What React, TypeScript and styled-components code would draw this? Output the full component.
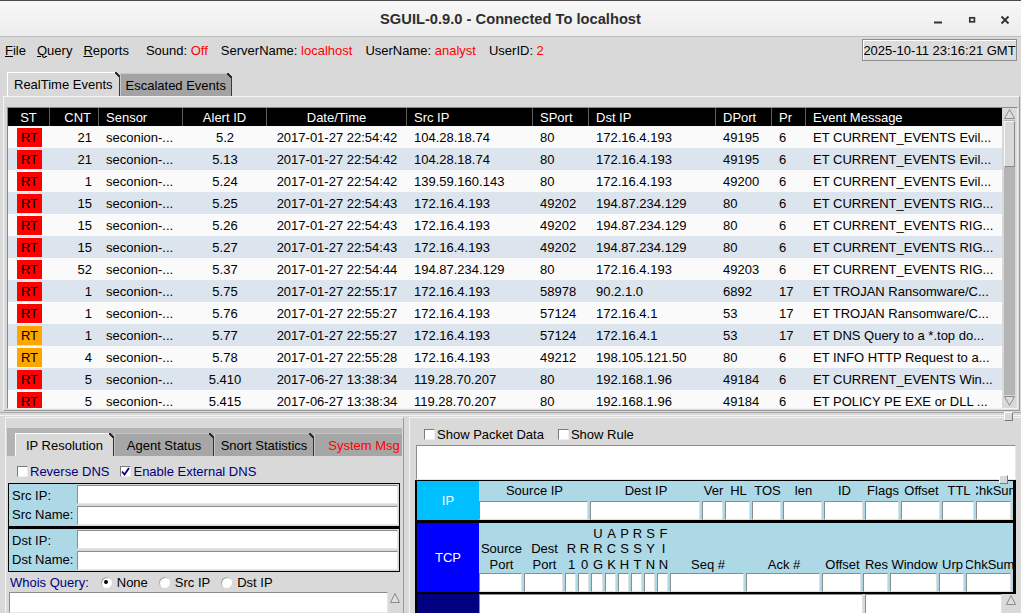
import React from "react";
import styled, { createGlobalStyle } from "styled-components";

const GlobalStyle = createGlobalStyle`
  html, body { margin: 0; padding: 0; background: #d9d9d9; }
  body { font-family: "Liberation Sans", Arial, Helvetica, sans-serif; font-size: 13px; color: #000; }
  * { box-sizing: border-box; }
`;

const Window = styled.div`
  position: relative;
  width: 1021px;
  height: 613px;
  overflow: hidden;
  background: #d9d9d9;
  display: flex;
  flex-direction: column;
`;

/* ---------- title bar ---------- */
const TitleBar = styled.div`
  flex: 0 0 37px;
  border-top: 1px solid #4a4a4a;
  border-bottom: 1px solid #bdbdbd;
  background: linear-gradient(#f8f8f8, #ececec);
  display: grid;
  grid-template-columns: 1fr auto 1fr;
  align-items: center;
`;
const Title = styled.div`
  grid-column: 2;
  font-weight: bold;
  font-size: 14.7px;
  color: #2e2e2e;
`;
const WinButtons = styled.div`
  grid-column: 3;
  justify-self: end;
  display: flex;
  height: 100%;
`;
const WinButton = styled.div<{ $w: number }>`
  width: ${(p) => p.$w}px;
  height: 100%;
  display: flex;
  align-items: center;
  justify-content: center;
`;

/* ---------- menu bar ---------- */
const MenuBar = styled.div`
  flex: 0 0 26px;
  display: flex;
  align-items: center;
  padding: 0 4px 0 5px;
  white-space: nowrap;
`;
const Menus = styled.div`
  display: flex;
  gap: 11px;
`;
const StatusGroup = styled.div`
  display: flex;
  gap: 13px;
  margin-left: 17px;
`;
const Value = styled.span`
  color: #ff0000;
`;
const Clock = styled.div`
  margin-left: auto;
  width: 155px;
  height: 22px;
  border: 1px solid #8c8c8c;
  box-shadow: inset 1px 1px 0 #ffffff;
  background: #dcdcdc;
  display: flex;
  align-items: center;
  justify-content: center;
  overflow: hidden;
`;

/* ---------- top notebook ---------- */
const TopSection = styled.div`
  flex: 0 0 auto;
  padding: 9px 1px 0 3px;
`;
const TabStrip = styled.div`
  display: flex;
  align-items: flex-end;
  padding-left: 4px;
  height: 24px;
`;
const TopTab = styled.div<{ $active?: boolean }>`
  position: relative;
  height: ${(p) => (p.$active ? 24 : 23)}px;
  padding: 0 ${(p) => (p.$active ? 6 : 5)}px 0 ${(p) => (p.$active ? 6 : 5)}px;
  display: flex;
  align-items: center;
  background: ${(p) => (p.$active ? "#d9d9d9" : "#a3a3a3")};
  border-left: 1px solid ${(p) => (p.$active ? "#ffffff" : "#c8c8c8")};
  border-top: 1px solid ${(p) => (p.$active ? "#ffffff" : "#c8c8c8")};
  border-right: 1px solid #3a3a3a;
  &::after {
    content: "";
    position: absolute;
    top: -1px;
    right: -1px;
    width: 5px;
    height: 5px;
    background: linear-gradient(to bottom left, #d9d9d9 0 38%, #2a2a2a 38% 62%, transparent 62%);
  }
`;
const TopPane = styled.div`
  border-top: 1px solid #f4f4f4;
  border-left: 1px solid #f4f4f4;
  border-right: 1px solid #9a9a9a;
  border-bottom: 1px solid #9a9a9a;
  padding: 10px 1px 1px 3px;
`;
const EventsFrame = styled.div`
  height: 302px;
  display: flex;
  border: 1px solid;
  border-color: #8a8a8a #f2f2f2 #f2f2f2 #8a8a8a;
`;
const EventsTable = styled.div`
  flex: 0 0 994px;
  overflow: hidden;
  background: #fafafa;
`;
const COLS = "42px 49px 84px 84px 140px 126px 56px 127px 56px 34px 196px";
const HeaderRow = styled.div`
  display: grid;
  grid-template-columns: ${COLS};
  height: 18px;
  background: #000;
  color: #fff;
`;
type Align = "left" | "center" | "right";
const HeadCell = styled.div<{ $align: Align; $last?: boolean }>`
  display: flex;
  align-items: center;
  justify-content: ${(p) => (p.$align === "left" ? "flex-start" : p.$align === "right" ? "flex-end" : "center")};
  padding: 0 7px;
  border-right: ${(p) => (p.$last ? "none" : "1px solid #5e5e5e")};
  white-space: nowrap;
  overflow: hidden;
`;
const Row = styled.div<{ $alt: boolean }>`
  display: grid;
  grid-template-columns: ${COLS};
  height: 22px;
  background: ${(p) => (p.$alt ? "#dce4ed" : "#fafafa")};
`;
const Cell = styled.div<{ $align: Align }>`
  display: flex;
  align-items: center;
  justify-content: ${(p) => (p.$align === "left" ? "flex-start" : p.$align === "right" ? "flex-end" : "center")};
  padding: 0 ${(p) => (p.$align === "right" ? "7px" : "0")} 0 ${(p) => (p.$align === "left" ? "7px" : "0")};
  white-space: nowrap;
  overflow: hidden;
`;
const StCell = styled.div`
  display: flex;
  align-items: center;
  padding-left: 9px;
`;
const Badge = styled.div<{ $color: string }>`
  width: 25px;
  height: 19px;
  background: ${(p) => p.$color};
  display: flex;
  align-items: center;
  justify-content: center;
`;

/* ---------- scrollbars ---------- */
const VScroll = styled.div`
  flex: 1;
  display: flex;
  flex-direction: column;
  padding: 0 2px 1px 2px;
  background: #d9d9d9;
`;
const ArrowBtn = styled.div<{ $h: number }>`
  flex: 0 0 ${(p) => p.$h}px;
  display: flex;
  align-items: center;
  justify-content: center;
`;
const Trough = styled.div`
  flex: 1;
  background: #b4b4b4;
  display: flex;
  flex-direction: column;
  padding-top: 1px;
`;
const Thumb = styled.div<{ $h: number }>`
  flex: 0 0 ${(p) => p.$h}px;
  background: #d9d9d9;
  border: 1px solid;
  border-color: #f6f6f6 #8a8a8a #8a8a8a #f6f6f6;
`;

function Arrow({ up, w = 11, h = 10 }: { up: boolean; w?: number; h?: number }) {
  const pts = up ? `0.5,${h - 0.5} ${w / 2},0.5 ${w - 0.5},${h - 0.5}` : `0.5,0.5 ${w / 2},${h - 0.5} ${w - 0.5},0.5`;
  return (
    <svg width={w} height={h} viewBox={`0 0 ${w} ${h}`}>
      <polygon points={pts} fill="#dedede" stroke="#8a8a8a" strokeWidth="1" />
    </svg>
  );
}

/* ---------- sash ---------- */
const Sash = styled.div`
  flex: 0 0 6px;
  display: flex;
  align-items: center;
  &::before {
    content: "";
    flex: 1;
    height: 2px;
    border-top: 1px solid #a8a8a8;
    border-bottom: 1px solid #f4f4f4;
  }
`;
const SashHandle = styled.div<{ $x: number; $y: number }>`
  position: absolute;
  left: ${(p) => p.$x}px;
  top: ${(p) => p.$y}px;
  width: 9px;
  height: 9px;
  background: #d9d9d9;
  border: 1px solid;
  border-color: #ffffff #7a7a7a #7a7a7a #ffffff;
`;

/* ---------- bottom area ---------- */
const BottomArea = styled.div`
  flex: 1;
  display: grid;
  grid-template-columns: 399px 1fr;
  column-gap: 5px;
  padding-left: 5px;
  min-height: 0;
`;
const LeftPane = styled.div`
  border-left: 1px solid #f4f4f4;
  border-top: 1px solid #f4f4f4;
  border-right: 1px solid #9a9a9a;
  padding: 10px 1px 0 1px;
  display: flex;
  flex-direction: column;
  overflow: hidden;
`;
const SubTabStrip = styled.div`
  flex: 0 0 28px;
  background: #b3b3b3;
  padding: 5px 0 0 8px;
  display: flex;
  overflow: hidden;
`;
const SubTab = styled.div<{ $active?: boolean; $alert?: boolean }>`
  position: relative;
  flex: 0 0 auto;
  width: ${(p) => (p.$active ? 99 : 100)}px;
  height: 23px;
  display: flex;
  align-items: center;
  justify-content: center;
  white-space: nowrap;
  background: ${(p) => (p.$active ? "#d9d9d9" : "#a6a6a6")};
  color: ${(p) => (p.$alert ? "#ff0000" : "#000")};
  border-left: 1px solid ${(p) => (p.$active ? "#ffffff" : "#c4c4c4")};
  border-top: 1px solid ${(p) => (p.$active ? "#ffffff" : "#c4c4c4")};
  border-right: 1px solid #303030;
  &::after {
    content: "";
    position: absolute;
    top: -1px;
    right: -1px;
    width: 5px;
    height: 5px;
    background: linear-gradient(to bottom left, #b3b3b3 0 38%, #2a2a2a 38% 62%, transparent 62%);
  }
`;
const IpBody = styled.div`
  flex: 1;
  display: flex;
  flex-direction: column;
  min-height: 0;
`;
const CheckRow = styled.div<{ $gap: number; $pad: string }>`
  flex: 0 0 27px;
  display: flex;
  align-items: center;
  gap: ${(p) => p.$gap}px;
  padding: ${(p) => p.$pad};
`;
const CheckLabel = styled.label<{ $navy?: boolean }>`
  display: flex;
  align-items: center;
  gap: 2px;
  color: ${(p) => (p.$navy ? "#000080" : "#000")};
  white-space: nowrap;
`;
const BoxMark = styled.span`
  width: 11px;
  height: 11px;
  background: #fff;
  border-top: 1px solid #7a7a7a;
  border-left: 1px solid #7a7a7a;
  border-right: 1px solid #ececec;
  border-bottom: 1px solid #ececec;
  display: inline-flex;
  align-items: center;
  justify-content: center;
`;
function CheckBox({ checked }: { checked?: boolean }) {
  return (
    <BoxMark>
      {checked && (
        <svg width="9" height="9" viewBox="0 0 9 9">
          <path d="M1 4.5 L3.5 7.5 L8 1" fill="none" stroke="#000080" strokeWidth="1.8" />
        </svg>
      )}
    </BoxMark>
  );
}
const AddrFrame = styled.div<{ $thick?: boolean }>`
  margin: 0 2px 0 1px;
  border: 1px solid #000;
  border-top-width: ${(p) => (p.$thick ? 3 : 1)}px;
  border-bottom-width: ${(p) => (p.$thick ? 1 : 0)}px;
  display: grid;
  grid-template-columns: 68px 1fr;
`;
const AddrLabels = styled.div`
  background: #add8e6;
  display: grid;
  grid-template-rows: 20px 19px;
  padding-top: 1px;
`;
const AddrLabel = styled.div`
  display: flex;
  align-items: center;
  padding-left: 3px;
  white-space: nowrap;
`;
const AddrInputs = styled.div`
  display: grid;
  grid-template-rows: 19px 19px;
  row-gap: 2px;
  padding: 1px 1px 1px 0;
`;
const Field = styled.div`
  background: #fff;
  border: 1px solid;
  border-color: #8c8c8c #e6e6e6 #e6e6e6 #8c8c8c;
`;
const WhoisRow = styled.div`
  flex: 0 0 20px;
  display: flex;
  align-items: center;
  padding-left: 3px;
  gap: 5px;
  white-space: nowrap;
`;
const Navy = styled.span`
  color: #000080;
  margin-right: 7px;
`;
const RadioLabel = styled.span`
  display: flex;
  align-items: center;
  gap: 5px;
  margin-right: 6px;
`;
const RadioMark = styled.span`
  width: 11px;
  height: 11px;
  border-radius: 50%;
  background: #fff;
  box-shadow: inset 1px 1px 0 #a8a8a8;
  display: inline-flex;
  align-items: center;
  justify-content: center;
`;
const RadioDot = styled.span`
  width: 4px;
  height: 4px;
  border-radius: 50%;
  background: #000;
`;
const WhoisBox = styled.div`
  flex: 1;
  display: flex;
  padding: 0 2px 0 2px;
  min-height: 0;
`;
const TextArea = styled.div`
  flex: 1;
  background: #fff;
  border: 1px solid;
  border-color: #8c8c8c #e6e6e6 #e6e6e6 #8c8c8c;
`;
const SmallScroll = styled.div`
  flex: 0 0 11px;
  margin-left: 1px;
  display: flex;
  flex-direction: column;
  background: #d9d9d9;
`;

/* ---------- right pane ---------- */
const RightPane = styled.div`
  border-left: 1px solid #f4f4f4;
  border-top: 1px solid #f4f4f4;
  display: flex;
  flex-direction: column;
  overflow: hidden;
`;
const RuleBox = styled.div`
  flex: 0 0 35px;
  margin: 0 5px 0 6px;
  background: #fff;
  border: 1px solid;
  border-color: #8c8c8c #e6e6e6 #e6e6e6 #8c8c8c;
`;
const PacketGrid = styled.div`
  flex: 1;
  margin: 0 5px 0 5px;
  background: #000;
  padding: 1px 3px 0 2px;
  display: flex;
  flex-direction: column;
  gap: 3px;
`;
const ProtoRow = styled.div<{ $gapTop?: number }>`
  display: grid;
  grid-template-columns: 62px 1fr;
  margin-top: ${(p) => p.$gapTop ?? 0}px;
`;
const ProtoCell = styled.div<{ $bg: string }>`
  background: ${(p) => p.$bg};
  color: #fff;
  display: flex;
  align-items: center;
  justify-content: center;
`;
const FieldGrid = styled.div<{ $cols: string; $head: number }>`
  display: grid;
  grid-template-columns: ${(p) => p.$cols};
  grid-template-rows: ${(p) => p.$head}px 19px;
  background: #add8e6;
`;
const FieldHead = styled.div<{ $bottom?: boolean }>`
  display: flex;
  flex-direction: column;
  align-items: center;
  justify-content: ${(p) => (p.$bottom ? "flex-end" : "center")};
  padding-bottom: ${(p) => (p.$bottom ? 1 : 0)}px;
  line-height: 15.5px;
  white-space: nowrap;
  overflow: hidden;
`;
const FieldBox = styled.div`
  margin-right: 2px;
  background: #fff;
  border: 1px solid;
  border-color: #8c8c8c #e0e0e0 #e0e0e0 #8c8c8c;
`;
const DataRow = styled.div`
  display: flex;
  gap: 2px;
  background: #d9d9d9;
  min-height: 30px;
`;
const DataBox = styled.div<{ $w: number }>`
  flex: 0 0 ${(p) => p.$w}px;
  background: #fff;
  border: 1px solid;
  border-color: #8c8c8c #e0e0e0 #e0e0e0 #8c8c8c;
`;

/* ---------- data ---------- */
const columns: { label: string; align: Align }[] = [
  { label: "ST", align: "center" },
  { label: "CNT", align: "right" },
  { label: "Sensor", align: "left" },
  { label: "Alert ID", align: "center" },
  { label: "Date/Time", align: "center" },
  { label: "Src IP", align: "left" },
  { label: "SPort", align: "left" },
  { label: "Dst IP", align: "left" },
  { label: "DPort", align: "left" },
  { label: "Pr", align: "left" },
  { label: "Event Message", align: "left" },
];

const RED = "#ff0000";
const ORANGE = "#ffa500";
type Ev = [string, string, string, string, string, string, string, string, string, string];
const events: Ev[] = [
  [RED, "21", "5.2", "2017-01-27 22:54:42", "104.28.18.74", "80", "172.16.4.193", "49195", "6", "ET CURRENT_EVENTS Evil..."],
  [RED, "21", "5.13", "2017-01-27 22:54:42", "104.28.18.74", "80", "172.16.4.193", "49195", "6", "ET CURRENT_EVENTS Evil..."],
  [RED, "1", "5.24", "2017-01-27 22:54:42", "139.59.160.143", "80", "172.16.4.193", "49200", "6", "ET CURRENT_EVENTS Evil..."],
  [RED, "15", "5.25", "2017-01-27 22:54:43", "172.16.4.193", "49202", "194.87.234.129", "80", "6", "ET CURRENT_EVENTS RIG..."],
  [RED, "15", "5.26", "2017-01-27 22:54:43", "172.16.4.193", "49202", "194.87.234.129", "80", "6", "ET CURRENT_EVENTS RIG..."],
  [RED, "15", "5.27", "2017-01-27 22:54:43", "172.16.4.193", "49202", "194.87.234.129", "80", "6", "ET CURRENT_EVENTS RIG..."],
  [RED, "52", "5.37", "2017-01-27 22:54:44", "194.87.234.129", "80", "172.16.4.193", "49203", "6", "ET CURRENT_EVENTS RIG..."],
  [RED, "1", "5.75", "2017-01-27 22:55:17", "172.16.4.193", "58978", "90.2.1.0", "6892", "17", "ET TROJAN Ransomware/C..."],
  [RED, "1", "5.76", "2017-01-27 22:55:27", "172.16.4.193", "57124", "172.16.4.1", "53", "17", "ET TROJAN Ransomware/C..."],
  [ORANGE, "1", "5.77", "2017-01-27 22:55:27", "172.16.4.193", "57124", "172.16.4.1", "53", "17", "ET DNS Query to a *.top do..."],
  [ORANGE, "4", "5.78", "2017-01-27 22:55:28", "172.16.4.193", "49212", "198.105.121.50", "80", "6", "ET INFO HTTP Request to a..."],
  [RED, "5", "5.410", "2017-06-27 13:38:34", "119.28.70.207", "80", "192.168.1.96", "49184", "6", "ET CURRENT_EVENTS Win..."],
  [RED, "5", "5.415", "2017-06-27 13:38:34", "119.28.70.207", "80", "192.168.1.96", "49184", "6", "ET POLICY PE EXE or DLL ..."],
];

const ipFields: { label: string; w: number }[] = [
  { label: "Source IP", w: 111 },
  { label: "Dest IP", w: 112 },
  { label: "Ver", w: 23 },
  { label: "HL", w: 27 },
  { label: "TOS", w: 31 },
  { label: "len", w: 41 },
  { label: "ID", w: 41 },
  { label: "Flags", w: 36 },
  { label: "Offset", w: 41 },
  { label: "TTL", w: 34 },
  { label: "ChkSum", w: 37 },
];

const tcpFields: { lines: string[]; w: number }[] = [
  { lines: ["Source", "Port"], w: 45 },
  { lines: ["Dest", "Port"], w: 41 },
  { lines: ["R", "1"], w: 13 },
  { lines: ["R", "0"], w: 13 },
  { lines: ["U", "R", "G"], w: 14 },
  { lines: ["A", "C", "K"], w: 13 },
  { lines: ["P", "S", "H"], w: 13 },
  { lines: ["R", "S", "T"], w: 13 },
  { lines: ["S", "Y", "N"], w: 13 },
  { lines: ["F", "I", "N"], w: 13 },
  { lines: ["Seq #"], w: 76 },
  { lines: ["Ack #"], w: 76 },
  { lines: ["Offset"], w: 41 },
  { lines: ["Res"], w: 27 },
  { lines: ["Window"], w: 49 },
  { lines: ["Urp"], w: 27 },
  { lines: ["ChkSum"], w: 47 },
];

export default function App() {
  return (
    <>
      <GlobalStyle />
      <Window>
        <TitleBar>
          <Title>SGUIL-0.9.0 - Connected To localhost</Title>
          <WinButtons>
            <WinButton $w={34}>
              <svg width="12" height="12" viewBox="0 0 12 12">
                <rect x="2" y="8.5" width="8" height="2" fill="#333" />
              </svg>
            </WinButton>
            <WinButton $w={34}>
              <svg width="12" height="12" viewBox="0 0 12 12">
                <rect x="3.8" y="4.8" width="4.6" height="4" fill="none" stroke="#333" strokeWidth="1.7" />
              </svg>
            </WinButton>
            <WinButton $w={32}>
              <svg width="12" height="12" viewBox="0 0 12 12">
                <path d="M2.5 3.5 L9.5 10.5 M9.5 3.5 L2.5 10.5" stroke="#333" strokeWidth="1.9" />
              </svg>
            </WinButton>
          </WinButtons>
        </TitleBar>

        <MenuBar>
          <Menus>
            <span><u>F</u>ile</span>
            <span><u>Q</u>uery</span>
            <span><u>R</u>eports</span>
          </Menus>
          <StatusGroup>
            <span>Sound: <Value>Off</Value></span>
            <span>ServerName: <Value>localhost</Value></span>
            <span>UserName: <Value>analyst</Value></span>
            <span>UserID: <Value>2</Value></span>
          </StatusGroup>
          <Clock>2025-10-11 23:16:21 GMT</Clock>
        </MenuBar>

        <TopSection>
          <TabStrip>
            <TopTab $active>RealTime Events</TopTab>
            <TopTab>Escalated Events</TopTab>
          </TabStrip>
          <TopPane>
            <EventsFrame>
              <EventsTable>
                <HeaderRow>
                  {columns.map((c, i) => (
                    <HeadCell key={c.label} $align={c.align} $last={i === columns.length - 1}>
                      {c.label}
                    </HeadCell>
                  ))}
                </HeaderRow>
                {events.map((e, i) => (
                  <Row key={i} $alt={i % 2 === 1}>
                    <StCell>
                      <Badge $color={e[0]}>RT</Badge>
                    </StCell>
                    <Cell $align="right">{e[1]}</Cell>
                    <Cell $align="left">seconion-...</Cell>
                    <Cell $align="center">{e[2]}</Cell>
                    <Cell $align="center">{e[3]}</Cell>
                    <Cell $align="left">{e[4]}</Cell>
                    <Cell $align="left">{e[5]}</Cell>
                    <Cell $align="left">{e[6]}</Cell>
                    <Cell $align="left">{e[7]}</Cell>
                    <Cell $align="left">{e[8]}</Cell>
                    <Cell $align="left">{e[9]}</Cell>
                  </Row>
                ))}
              </EventsTable>
              <VScroll>
                <ArrowBtn $h={12}>
                  <Arrow up />
                </ArrowBtn>
                <Trough>
                  <Thumb $h={46} />
                </Trough>
                <ArrowBtn $h={12}>
                  <Arrow up={false} />
                </ArrowBtn>
              </VScroll>
            </EventsFrame>
          </TopPane>
        </TopSection>

        <Sash />

        <BottomArea>
          <LeftPane>
            <SubTabStrip>
              <SubTab $active>IP Resolution</SubTab>
              <SubTab>Agent Status</SubTab>
              <SubTab>Snort Statistics</SubTab>
              <SubTab $alert>System Msg</SubTab>
            </SubTabStrip>
            <IpBody>
              <CheckRow $gap={11} $pad="4px 0 0 10px">
                <CheckLabel $navy>
                  <CheckBox />
                  Reverse DNS
                </CheckLabel>
                <CheckLabel $navy>
                  <CheckBox checked />
                  Enable External DNS
                </CheckLabel>
              </CheckRow>
              <AddrFrame>
                <AddrLabels>
                  <AddrLabel>Src IP:</AddrLabel>
                  <AddrLabel>Src Name:</AddrLabel>
                </AddrLabels>
                <AddrInputs>
                  <Field />
                  <Field />
                </AddrInputs>
              </AddrFrame>
              <AddrFrame $thick>
                <AddrLabels>
                  <AddrLabel>Dst IP:</AddrLabel>
                  <AddrLabel>Dst Name:</AddrLabel>
                </AddrLabels>
                <AddrInputs>
                  <Field />
                  <Field />
                </AddrInputs>
              </AddrFrame>
              <WhoisRow>
                <Navy>Whois Query:</Navy>
                <RadioLabel>
                  <RadioMark>
                    <RadioDot />
                  </RadioMark>
                  None
                </RadioLabel>
                <RadioLabel>
                  <RadioMark />
                  Src IP
                </RadioLabel>
                <RadioLabel>
                  <RadioMark />
                  Dst IP
                </RadioLabel>
              </WhoisRow>
              <WhoisBox>
                <TextArea />
                <SmallScroll>
                  <ArrowBtn $h={12}>
                    <Arrow up w={10} h={10} />
                  </ArrowBtn>
                </SmallScroll>
              </WhoisBox>
            </IpBody>
          </LeftPane>

          <RightPane>
            <CheckRow $gap={14} $pad="6px 0 0 14px">
              <CheckLabel>
                <CheckBox />
                Show Packet Data
              </CheckLabel>
              <CheckLabel>
                <CheckBox />
                Show Rule
              </CheckLabel>
            </CheckRow>
            <RuleBox />
            <PacketGrid>
              <ProtoRow>
                <ProtoCell $bg="#00bfff">IP</ProtoCell>
                <FieldGrid $cols={ipFields.map((f) => `${f.w}px`).join(" ")} $head={20}>
                  {ipFields.map((f) => (
                    <FieldHead key={"h" + f.label}>{f.label}</FieldHead>
                  ))}
                  {ipFields.map((f) => (
                    <FieldBox key={"b" + f.label} />
                  ))}
                </FieldGrid>
              </ProtoRow>
              <ProtoRow>
                <ProtoCell $bg="#0000ff">TCP</ProtoCell>
                <FieldGrid $cols={tcpFields.map((f) => `${f.w}px`).join(" ")} $head={50}>
                  {tcpFields.map((f, i) => (
                    <FieldHead key={"h" + i} $bottom>
                      {f.lines.map((l, j) => (
                        <span key={j}>{l}</span>
                      ))}
                    </FieldHead>
                  ))}
                  {tcpFields.map((f, i) => (
                    <FieldBox key={"b" + i} />
                  ))}
                </FieldGrid>
              </ProtoRow>
              <ProtoRow $gapTop={-1}>
                <ProtoCell $bg="#000080" />
                <DataRow>
                  <DataBox $w={384} />
                  <DataBox $w={137} />
                  <SmallScroll>
                    <ArrowBtn $h={12}>
                      <Arrow up w={10} h={10} />
                    </ArrowBtn>
                  </SmallScroll>
                </DataRow>
              </ProtoRow>
            </PacketGrid>
          </RightPane>
        </BottomArea>

        <SashHandle $x={1004} $y={412} />
        <SashHandle $x={999} $y={475} />
      </Window>
    </>
  );
}
